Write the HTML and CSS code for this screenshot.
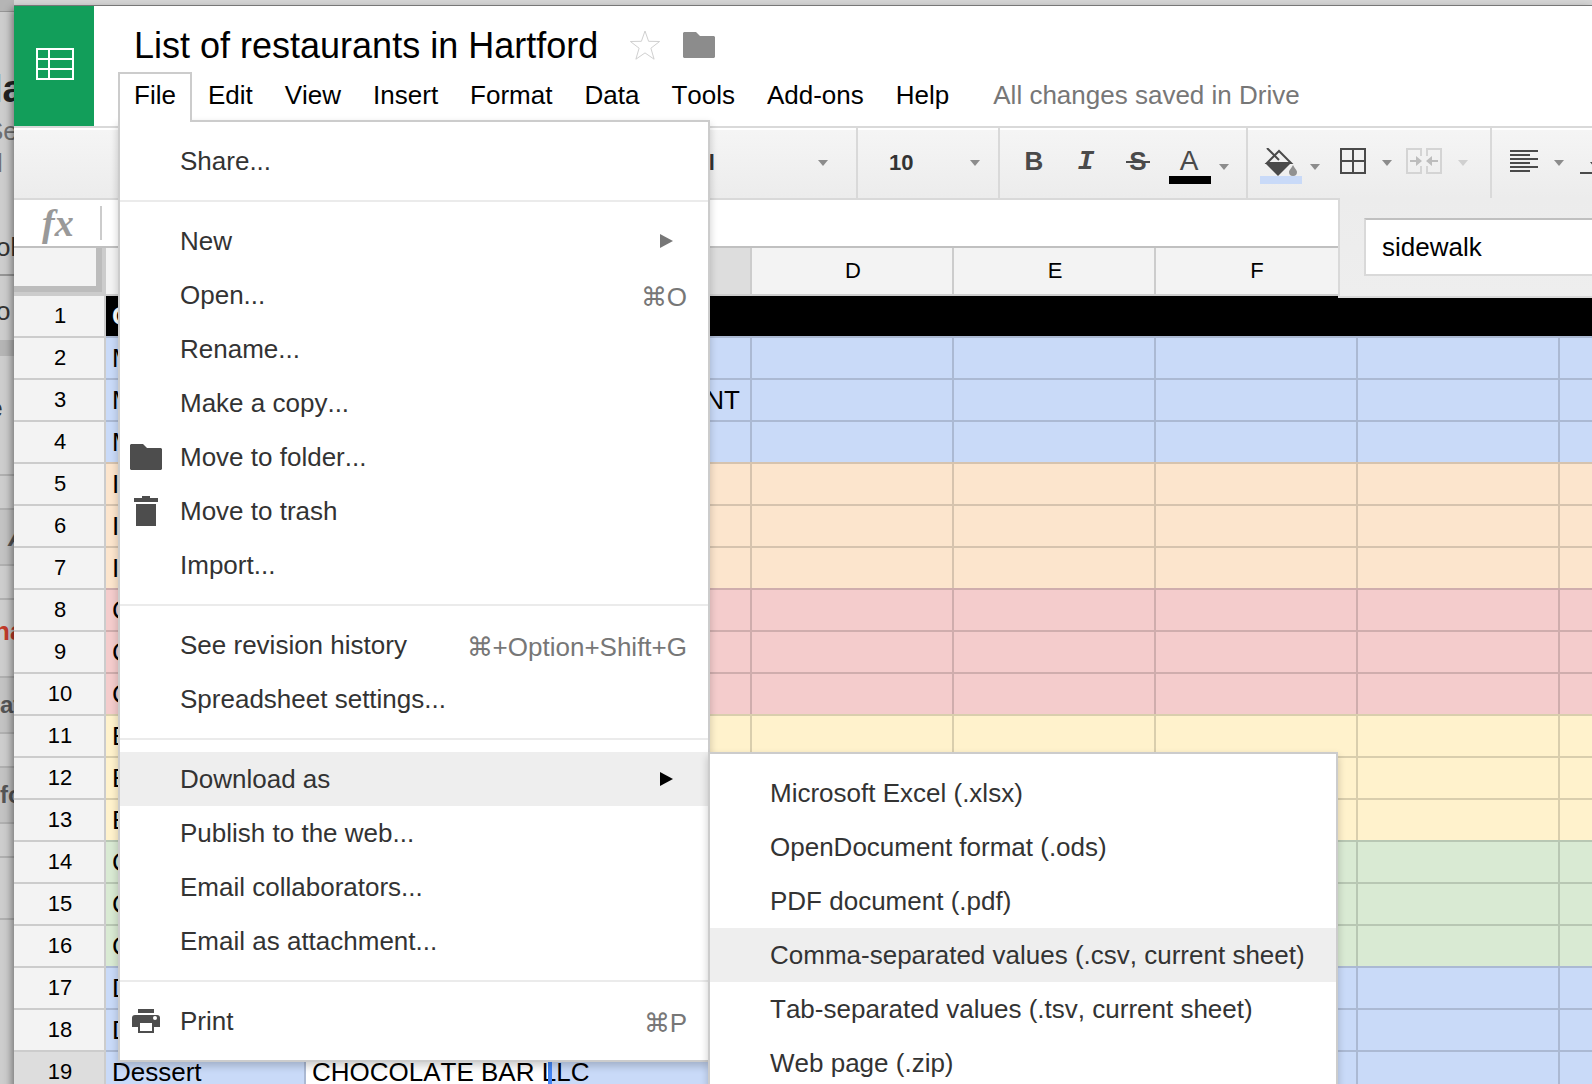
FILE: index.html
```html
<!DOCTYPE html>
<html lang="en">
<head>
<meta charset="utf-8">
<title>List of restaurants in Hartford</title>
<link rel="stylesheet" href="styles.css">
</head>
<body>
<div class="desktop">
  <aside class="behind" aria-hidden="true">
    <div class="slice slice-top"></div>
    <div class="slice slice-head"><b class="big">la</b><span class="grey">Se</span><span class="grey tail">l</span><span class="link">ol</span></div>
    <div class="slice h64 low-text"><span class="link">o</span></div>
    <div class="slice band"></div>
    <div class="slice h120 line high-text"><b class="edge">e</b></div>
    <div class="slice h34 line"></div>
    <div class="slice h56 line"><i class="slant">A</i></div>
    <div class="slice h34 line"></div>
    <div class="slice h78 line high-text"><b class="red">na</b></div>
    <div class="slice h56 line"><b class="label">at</b></div>
    <div class="slice h34 line"></div>
    <div class="slice h56 line"><b class="label">fo</b></div>
    <div class="slice h34 line"></div>
    <div class="slice h62 line"></div>
  </aside>

  <div class="window">
    <header class="header">
      <a class="logo" href="#" aria-label="Sheets home">
        <svg width="38" height="32" viewBox="0 0 38 32" fill="none" stroke="#fff" stroke-width="2"><path d="M1 1h36v30H1zM1 11h36M1 21h36M13 1v30"/></svg>
      </a>
      <div class="heading">
        <div class="title-row">
          <h1>List of restaurants in Hartford</h1>
          <button class="icon-btn" aria-label="Star"><svg width="32" height="32" viewBox="0 0 32 32" fill="none" stroke="#d0d0d0" stroke-width="1"><path d="M16 2l3.600 10.300 11 .200-8.700 6.700 3.200 11L16 23.900 6.900 30.200l3.200-11-8.700-6.700 11-.2z"/></svg></button>
          <button class="icon-btn" aria-label="Move to folder"><svg width="32" height="26" viewBox="0 0 32 26" fill="#8c8c8c"><path d="M1 0h12l4 4h14l1 1v20l-1 1H1l-1-1V1z"/></svg></button>
        </div>
        <nav class="menubar">
          <div class="menu-host">
            <button class="tab open" aria-expanded="true">File</button>
            <ul class="menu file-menu">
              <li><button class="item"><span class="slot"></span>Share...</button></li>
              <li class="rule"></li>
              <li><button class="item"><span class="slot"></span>New<span class="more"></span></button></li>
              <li><button class="item"><span class="slot"></span>Open...<kbd>⌘O</kbd></button></li>
              <li><button class="item"><span class="slot"></span>Rename...</button></li>
              <li><button class="item"><span class="slot"></span>Make a copy...</button></li>
              <li><button class="item"><span class="slot"><svg width="32" height="26" viewBox="0 0 32 26" fill="#4d4d4d"><path d="M1 0h12l4 4h14l1 1v20l-1 1H1l-1-1V1z"/></svg></span>Move to folder...</button></li>
              <li><button class="item"><span class="slot"><svg width="24" height="30" viewBox="0 0 24 30" fill="#4d4d4d"><path d="M8 0h8v2h8v4H0V2h8zM2 8h20v22H2z"/></svg></span>Move to trash</button></li>
              <li><button class="item"><span class="slot"></span>Import...</button></li>
              <li class="rule"></li>
              <li><button class="item"><span class="slot"></span>See revision history<kbd>⌘+Option+Shift+G</kbd></button></li>
              <li><button class="item"><span class="slot"></span>Spreadsheet settings...</button></li>
              <li class="rule"></li>
              <li class="sub-host">
                <button class="item active" aria-expanded="true"><span class="slot"></span>Download as<span class="more"></span></button>
                <ul class="menu sub-menu">
                  <li><button class="item">Microsoft Excel (.xlsx)</button></li>
                  <li><button class="item">OpenDocument format (.ods)</button></li>
                  <li><button class="item">PDF document (.pdf)</button></li>
                  <li><button class="item active">Comma-separated values (.csv, current sheet)</button></li>
                  <li><button class="item">Tab-separated values (.tsv, current sheet)</button></li>
                  <li><button class="item">Web page (.zip)</button></li>
                </ul>
              </li>
              <li><button class="item"><span class="slot"></span>Publish to the web...</button></li>
              <li><button class="item"><span class="slot"></span>Email collaborators...</button></li>
              <li><button class="item"><span class="slot"></span>Email as attachment...</button></li>
              <li class="rule"></li>
              <li><button class="item"><span class="slot"><svg width="28" height="24" viewBox="0 0 28 24"><path fill="#4d4d4d" d="M6 0h16v4H6zM3 6h22a3 3 0 0 1 3 3v9h-6v6H6v-6H0V9a3 3 0 0 1 3-3z"/><path fill="#fff" d="M8 14h12v8H8z"/><circle cx="23" cy="9" r="2" fill="#fff"/></svg></span>Print<kbd>⌘P</kbd></button></li>
            </ul>
          </div>
          <button class="tab">Edit</button>
          <button class="tab">View</button>
          <button class="tab">Insert</button>
          <button class="tab">Format</button>
          <button class="tab">Data</button>
          <button class="tab">Tools</button>
          <button class="tab">Add-ons</button>
          <button class="tab">Help</button>
          <span class="status">All changes saved in Drive</span>
        </nav>
      </div>
    </header>

    <div class="toolbar">
      <div class="group font-group"><select aria-label="Font"><option>Arial</option></select><span class="caret"></span></div>
      <div class="group size-group"><select aria-label="Font size"><option>10</option></select><span class="caret"></span></div>
      <div class="group text-group">
        <button class="tool letter bold" aria-label="Bold">B</button>
        <button class="tool letter italic" aria-label="Italic">I</button>
        <button class="tool letter strike" aria-label="Strikethrough">S</button>
        <button class="tool color" aria-label="Text color"><span class="swatch black">A</span><span class="caret low"></span></button>
      </div>
      <div class="group cell-group">
        <button class="tool color fill" aria-label="Fill color"><span class="swatch blue"><svg width="34" height="28" viewBox="0 0 34 28"><path d="M3 0l12 12M15 3L3 15h24z" fill="none" stroke="#4a4a4a" stroke-width="2"/><path d="M1 15h26L14 28z" fill="#4a4a4a"/><path d="M29 17c2 4 4 5 4 7a4 4 0 0 1-8 0c0-2 2-3 4-7z" fill="#919191"/></svg></span><span class="caret low"></span></button>
        <button class="tool" aria-label="Borders"><svg width="26" height="26" viewBox="0 0 26 26" fill="none" stroke="#4a4a4a" stroke-width="2"><path d="M1 1h24v24H1zM13 1v24M1 13h24"/></svg><span class="caret"></span></button>
        <button class="tool dim" aria-label="Merge cells"><svg width="36" height="26" viewBox="0 0 36 26" fill="none" stroke-width="2"><path stroke="#d4d4d4" d="M15 8V1H1v24h14v-7M21 8V1h14v24H21v-7"/><path stroke="#bdbdbd" d="M4 13h8M24 13h8"/><path fill="#bdbdbd" d="M10 8l6 5-6 5zM26 8l-6 5 6 5z"/></svg><span class="caret"></span></button>
      </div>
      <div class="group align-group">
        <button class="tool" aria-label="Horizontal align"><svg width="28" height="22" viewBox="0 0 28 22" stroke="#4a4a4a" stroke-width="2"><path d="M0 1h28M0 5h20M0 9h28M0 13h20M0 17h28M0 21h20"/></svg><span class="caret"></span></button>
        <button class="tool" aria-label="Vertical align"><svg width="28" height="26" viewBox="0 0 28 26" fill="#4a4a4a"><path d="M0 24h28v2H0zM10 14h8l-4 5zM13 2h2v13h-2z"/></svg></button>
      </div>
    </div>

    <div class="formula"><label class="fx" for="formula">fx</label><input id="formula" type="text"></div>

    <form class="find"><input type="text" value="sidewalk" aria-label="Find in sheet"></form>

    <table class="sheet">
      <colgroup><col class="c-num"><col class="c-a"><col class="c-b"><col class="c-c"><col class="c-std"><col class="c-std"><col class="c-std"><col class="c-std"><col></colgroup>
      <thead><tr><th class="corner"></th><th></th><th class="sel"></th><th class="sel"></th><th>D</th><th>E</th><th>F</th><th></th><th></th></tr></thead>
      <tbody>
        <tr class="black"><th>1</th><td>C</td><td></td><td></td><td></td><td></td><td></td><td></td><td></td></tr>
        <tr class="blue"><th>2</th><td>M</td><td></td><td></td><td></td><td></td><td></td><td></td><td></td></tr>
        <tr class="blue"><th>3</th><td>M</td><td></td><td class="end">NT</td><td></td><td></td><td></td><td></td><td></td></tr>
        <tr class="blue"><th>4</th><td>M</td><td></td><td></td><td></td><td></td><td></td><td></td><td></td></tr>
        <tr class="orange"><th>5</th><td>I</td><td></td><td></td><td></td><td></td><td></td><td></td><td></td></tr>
        <tr class="orange"><th>6</th><td>I</td><td></td><td></td><td></td><td></td><td></td><td></td><td></td></tr>
        <tr class="orange"><th>7</th><td>I</td><td></td><td></td><td></td><td></td><td></td><td></td><td></td></tr>
        <tr class="red-row"><th>8</th><td>C</td><td></td><td></td><td></td><td></td><td></td><td></td><td></td></tr>
        <tr class="red-row"><th>9</th><td>C</td><td></td><td></td><td></td><td></td><td></td><td></td><td></td></tr>
        <tr class="red-row"><th>10</th><td>C</td><td></td><td></td><td></td><td></td><td></td><td></td><td></td></tr>
        <tr class="yellow"><th>11</th><td>B</td><td></td><td></td><td></td><td></td><td></td><td></td><td></td></tr>
        <tr class="yellow"><th>12</th><td>B</td><td></td><td></td><td></td><td></td><td></td><td></td><td></td></tr>
        <tr class="yellow"><th>13</th><td>B</td><td></td><td></td><td></td><td></td><td></td><td></td><td></td></tr>
        <tr class="green"><th>14</th><td>C</td><td></td><td></td><td></td><td></td><td></td><td></td><td></td></tr>
        <tr class="green"><th>15</th><td>C</td><td></td><td></td><td></td><td></td><td></td><td></td><td></td></tr>
        <tr class="green"><th>16</th><td>C</td><td></td><td></td><td></td><td></td><td></td><td></td><td></td></tr>
        <tr class="blue"><th>17</th><td>D</td><td></td><td></td><td></td><td></td><td></td><td></td><td></td></tr>
        <tr class="blue"><th>18</th><td>D</td><td></td><td></td><td></td><td></td><td></td><td></td><td></td></tr>
        <tr class="blue"><th class="sel">19</th><td>Dessert</td><td class="cursor">CHOCOLATE BAR LLC</td><td></td><td></td><td></td><td></td><td></td><td></td></tr>
      </tbody>
    </table>
  </div>
</div>
</body>
</html>
```
FILE: styles.css
```css
* { box-sizing: border-box; }

body {
  margin: 0;
  font-family: "Liberation Sans", Arial, sans-serif;
  font-size: 26px;
  font-kerning: none;
  color: #000;
  background: #d5d5d5;
}

button, input, select {
  font: inherit;
  font-kerning: inherit;
  color: inherit;
  margin: 0;
  padding: 0;
  border: 0;
  background: none;
}

svg { display: block; flex: none; }

.desktop {
  display: grid;
  grid-template-columns: 14px minmax(0, 1fr);
  height: 100vh;
  overflow: hidden;
}

/* Page showing from behind the window */
.behind {
  display: flex;
  flex-direction: column;
  overflow: hidden;
  background: #cdcdcd;
}
.slice {
  flex: none;
  display: flex;
  align-items: center;
  white-space: nowrap;
}
.slice-top { height: 12px; background: #b5b5b5; border-bottom: 1px solid #969696; }
.slice-head {
  height: 264px;
  flex-direction: column;
  align-items: flex-start;
  padding-top: 53px;
  border-bottom: 2px solid #969696;
}
.band { height: 16px; background: #b5b5b5; }
.line { border-bottom: 2px solid #b0b0b0; }
.low-text { padding-top: 6px; }
.high-text { padding-bottom: 14px; }
.h34 { height: 34px; }
.h56 { height: 56px; background: #c3c3c3; }
.h62 { height: 62px; }
.h64 { height: 64px; }
.h78 { height: 78px; }
.h120 { height: 120px; }
.big { font-size: 38px; line-height: 48px; margin-left: -8px; color: #222; }
.grey { font-size: 26px; line-height: 36px; margin-left: -14px; color: #707070; }
.grey.tail { line-height: 28px; margin-left: -3px; }
.link { color: #333; margin-left: -4px; }
.slice-head .link { line-height: 36px; margin-top: 52px; }
.edge { margin-left: -12px; color: #333; }
.slant { margin-left: 8px; color: #555; font-weight: 700; }
.red { margin-left: -6px; color: #c23b2b; }
.label { font-size: 24px; color: #555; }

.window {
  position: relative;
  border-top: 1px solid #777;
  margin-top: 5px;
  background: #fff;
  box-shadow: -2px 4px 8px rgba(0, 0, 0, .45);
}

/* Header */
.header { display: flex; height: 120px; }
.logo {
  flex: none;
  width: 80px;
  display: flex;
  align-items: center;
  justify-content: center;
  padding: 0 0 4px 2px;
  background: #129e5a;
}
.heading { flex: 1; padding-left: 24px; }
.title-row {
  height: 66px;
  display: flex;
  align-items: center;
  gap: 22px;
  padding: 14px 16px 0;
}
.icon-btn { padding-bottom: 3px; }
h1 { margin: 0 9px 0 0; font-size: 36px; line-height: 44px; font-weight: 400; }
.menubar { display: flex; align-items: flex-start; height: 48px; }
.tab {
  height: 50px;
  padding: 0 14px 6px;
  border: 2px solid transparent;
  border-bottom: 0;
  line-height: 30px;
}
.tab.open {
  position: relative;
  z-index: 3;
  border-color: #ccc;
  background: #fff;
}
.status { padding: 0 28px; line-height: 46px; color: #777; }

/* Menus */
.menu-host { position: relative; }
.menu {
  position: absolute;
  margin: 0;
  padding: 12px 0;
  list-style: none;
  background: #fff;
  border: 2px solid #ccc;
  box-shadow: 0 4px 8px rgba(0, 0, 0, .2);
  white-space: nowrap;
}
.file-menu { top: 48px; left: 0; width: 592px; z-index: 2; }
.item {
  display: flex;
  align-items: center;
  width: 100%;
  height: 54px;
  text-align: left;
  color: #333;
}
.item.active { background: #eee; }
.slot {
  flex: none;
  width: 52px;
  margin-right: 8px;
  display: flex;
  justify-content: center;
}
.item kbd { margin-left: auto; padding: 4px 21px 0 0; font: inherit; font-kerning: inherit; color: #777; }
.more {
  margin: 0 35px 0 auto;
  border: solid transparent;
  border-width: 7px 0 7px 13px;
  border-left-color: #777;
}
.active .more { border-left-color: #000; }
.rule { height: 2px; margin: 12px 0; background: #ebebeb; }
.sub-host { position: relative; }
.sub-menu { top: 0; left: 100%; width: 630px; }
.sub-menu .item { padding-left: 60px; }

/* Toolbar */
.toolbar {
  display: flex;
  height: 74px;
  overflow: hidden;
  border: solid #d9d9d9;
  border-width: 2px 0;
  background: linear-gradient(#fff 2px, #f5f5f5 2px, #ececec);
}
.group { flex: none; display: flex; align-items: center; border-right: 2px solid #d9d9d9; }
.group select { appearance: none; flex: 1; padding-bottom: 2px; font-size: 22px; font-weight: 700; color: #333; }
.font-group { margin-left: 640px; width: 204px; padding: 0 28px 0 12px; }
.size-group { width: 142px; padding: 0 18px 0 31px; }
.text-group { width: 248px; padding-left: 13px; gap: 10px; }
.cell-group { width: 244px; padding-left: 12px; gap: 14px; }
.align-group { border: 0; padding-left: 18px; gap: 16px; }
.caret { flex: none; border: solid transparent; border-width: 6px 5px 0; border-top-color: #8c8c8c; }
.tool { display: flex; align-items: center; justify-content: center; gap: 16px; height: 70px; color: #4a4a4a; }
.tool > svg { margin-bottom: 4px; }
.dim .caret { border-top-color: #d0d0d0; }
.letter { width: 42px; padding-bottom: 4px; font-weight: 700; }
.italic { font-family: "Liberation Mono", monospace; font-style: italic; font-size: 28px; }
.strike { position: relative; }
.strike::after {
  content: "";
  position: absolute;
  left: 9px;
  right: 9px;
  top: 33px;
  height: 2px;
  background: #4a4a4a;
}
.color { gap: 8px; }
.fill { padding-right: 6px; }
.low { margin-top: 8px; }
.swatch {
  width: 42px;
  height: 44px;
  margin-bottom: 2px;
  display: flex;
  align-items: flex-end;
  justify-content: center;
  font-size: 28px;
  line-height: 30px;
  border-bottom: 8px solid #000;
}
.swatch.black { padding-right: 2px; }
.swatch.blue { border-color: #c9daf8; }

/* Formula bar */
.formula { display: flex; align-items: center; height: 48px; border-bottom: 2px solid #c0c0c0; }
.fx {
  width: 88px;
  height: 34px;
  padding-left: 28px;
  border-right: 2px solid #ccc;
  font: italic 700 38px/34px "Liberation Serif", serif;
  color: #999;
}
.formula input { flex: 1; height: 46px; padding: 0 12px; }

.find {
  position: absolute;
  top: 192px;
  right: 0;
  width: 254px;
  height: 100px;
  padding: 20px 0 20px 24px;
  overflow: hidden;
  border: solid #d9d9d9;
  border-width: 0 0 2px 2px;
  background: linear-gradient(#ececec, #eee);
}
.find input {
  width: 300px;
  height: 58px;
  padding: 0 16px;
  background: #fff;
  border: 2px solid #d9d9d9;
  border-top-color: #c0c0c0;
}

/* Sheet */
.sheet { width: 100%; table-layout: fixed; border-collapse: separate; border-spacing: 0; }
.c-num { width: 92px; }
.c-a, .c-c { width: 200px; }
.c-b { width: 246px; }
.c-std { width: 202px; }
.sheet th {
  padding: 0 0 0 2px;
  font-size: 22px;
  font-weight: 400;
  background: #f3f3f3;
  border-right: 2px solid #ccc;
}
.sheet thead th { height: 46px; }
.sheet th.sel { background: #ddd; }
.sheet thead .corner { box-shadow: inset -2px -2px #ccc, inset -8px -8px #bcbcbc; }
.sheet tbody th { border-top: 2px solid #ccc; }
.sheet td {
  height: 42px;
  padding: 0 0 0 6px;
  line-height: 30px;
  white-space: nowrap;
  border: solid rgba(0, 0, 0, .15);
  border-width: 2px 2px 0 0;
}
.sheet td:last-child { border-right: 0; }
.sheet .end { text-align: right; padding-right: 10px; }
.sheet .black td { background: #000; color: #fff; font-weight: 700; border-top-color: #ccc; border-right: 0; }
.blue td { background: #c9daf8; }
.orange td { background: #fce5cd; }
.red-row td { background: #f4cccc; }
.yellow td { background: #fff2cc; }
.green td { background: #d9ead3; }
.sheet .cursor { position: relative; background: #fff; border-right-color: #fff; }
.cursor::after {
  content: "";
  position: absolute;
  top: 0;
  bottom: 0;
  right: -2px;
  width: 4px;
  background: #4285f4;
}
```
